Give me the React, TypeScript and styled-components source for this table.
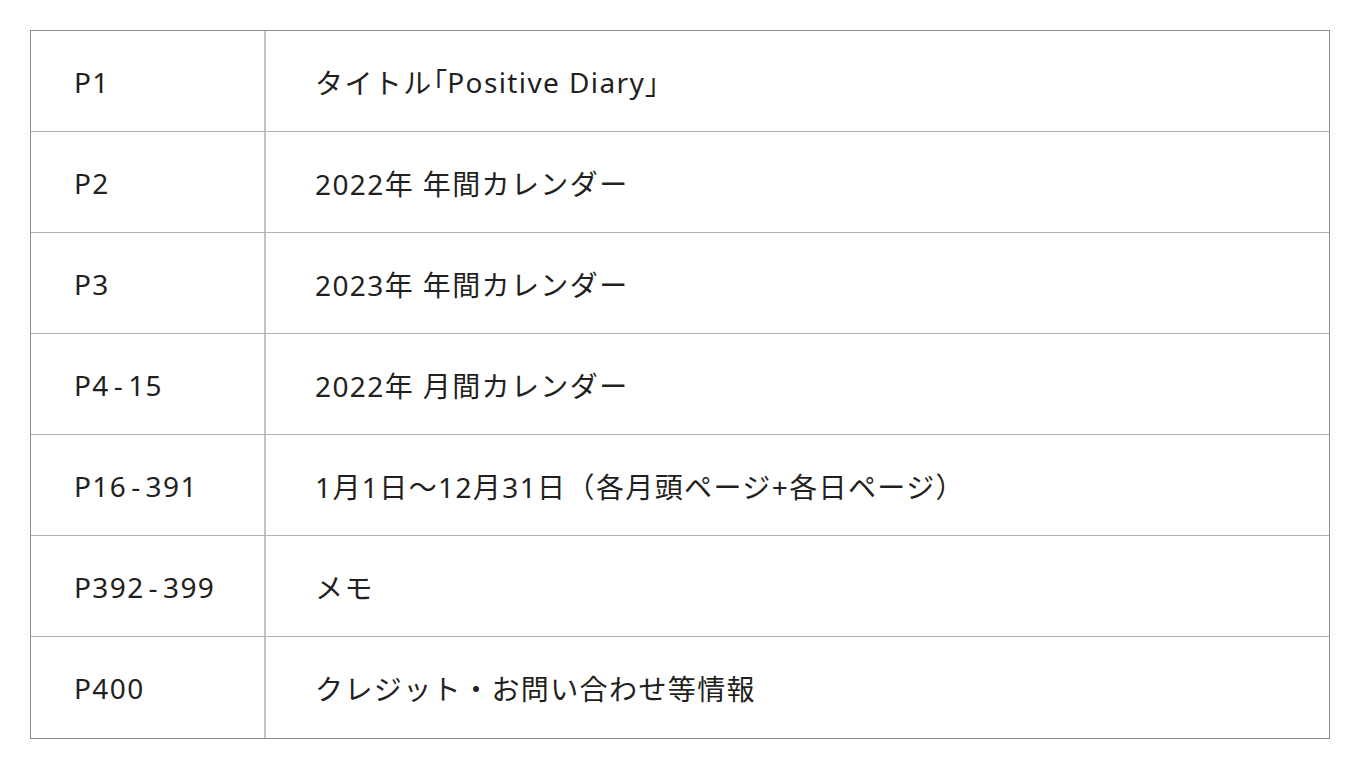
import React from "react";
import styled, { createGlobalStyle } from "styled-components";

const GlobalStyle = createGlobalStyle`
  *, *::before, *::after {
    box-sizing: border-box;
  }
  html, body {
    margin: 0;
    padding: 0;
    background: #ffffff;
  }
  body {
    font-family: "Noto Sans", "Noto Sans CJK JP", sans-serif;
    color: #231f20;
  }
`;

const Page = styled.div`
  padding: 30px 0 0 30px;
`;

const Table = styled.div`
  width: 1300px;
  border: 1px solid #8c8c8c;
  display: flex;
  flex-direction: column;
`;

const Row = styled.div`
  display: grid;
  grid-template-columns: 235px 1fr;
  height: 101px;
  border-bottom: 1px solid #b4b4b4;

  &:last-child {
    border-bottom: none;
    height: 101px;
  }
`;

const Cell = styled.div<{ $first?: boolean }>`
  display: flex;
  align-items: center;
  padding-left: ${(p) => (p.$first ? "43px" : "49px")};
  padding-top: 1px;
  font-size: 28px;
  font-weight: 400;
  letter-spacing: 1.4px;
  white-space: nowrap;
  border-right: ${(p) => (p.$first ? "2px solid #c4c4c4" : "none")};
`;

const Dash = styled.span`
  margin: 0 4px;
`;

const Bracket = styled.span`
  font-feature-settings: "palt";
  letter-spacing: 0.6px;
`;

const rows: { page: string[]; text: React.ReactNode }[] = [
  {
    page: ["P1"],
    text: (
      <>
        タイトル<Bracket>「</Bracket>Positive Diary<Bracket>」</Bracket>
      </>
    ),
  },
  { page: ["P2"], text: "2022年 年間カレンダー" },
  { page: ["P3"], text: "2023年 年間カレンダー" },
  { page: ["P4", "15"], text: "2022年 月間カレンダー" },
  { page: ["P16", "391"], text: "1月1日〜12月31日（各月頭ページ+各日ページ）" },
  { page: ["P392", "399"], text: "メモ" },
  { page: ["P400"], text: "クレジット・お問い合わせ等情報" },
];

export default function App() {
  return (
    <>
      <GlobalStyle />
      <Page>
        <Table>
          {rows.map((r) => (
            <Row key={r.page.join("-")}>
              <Cell $first>
                {r.page[0]}
                {r.page[1] && (
                  <>
                    <Dash>-</Dash>
                    {r.page[1]}
                  </>
                )}
              </Cell>
              <Cell>{r.text}</Cell>
            </Row>
          ))}
        </Table>
      </Page>
    </>
  );
}
